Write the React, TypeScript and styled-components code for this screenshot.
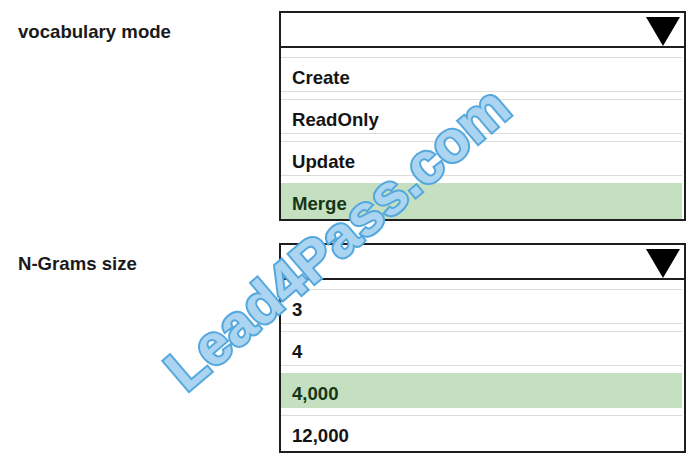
import React from "react";
import styled, { createGlobalStyle } from "styled-components";

interface DropdownField {
  label: string;
  options: string[];
  selected: string;
}

const fields: DropdownField[] = [
  {
    label: "vocabulary mode",
    options: ["Create", "ReadOnly", "Update", "Merge"],
    selected: "Merge",
  },
  {
    label: "N-Grams size",
    options: ["3", "4", "4,000", "12,000"],
    selected: "4,000",
  },
];

const GlobalStyle = createGlobalStyle`
  html, body {
    margin: 0;
    padding: 0;
    background: #ffffff;
  }
  body {
    font-family: "Liberation Sans", Arial, sans-serif;
    color: #161616;
  }
`;

const Page = styled.div`
  position: relative;
  width: 695px;
  height: 467px;
  box-sizing: border-box;
  padding: 11px 9px 0 18px;
  display: grid;
  grid-template-columns: 261px 407px;
  row-gap: 22px;
  align-content: start;
  overflow: hidden;
`;

const FieldLabel = styled.div`
  padding-top: 10px;
  font-size: 18.6px;
  font-weight: 700;
  line-height: 21px;
  color: #1a1a1a;
`;

const Dropdown = styled.div`
  width: 407px;
  height: 210px;
  box-sizing: border-box;
  border: 2px solid #1e1e1e;
  display: flex;
  flex-direction: column;
`;

const Header = styled.div`
  height: 35px;
  box-sizing: border-box;
  border-bottom: 2px solid #1e1e1e;
  display: flex;
  justify-content: flex-end;
  align-items: flex-end;
  padding-right: 4px;
`;

const OptionList = styled.div`
  flex: 1;
  display: flex;
  flex-direction: column;
  gap: 7px;
  padding: 9px 2px 0 0;
`;

const Option = styled.div<{ $selected: boolean }>`
  height: 35px;
  box-sizing: border-box;
  border-top: 1px solid ${(p) => (p.$selected ? "#c4e0c1" : "#dcdcdc")};
  border-bottom: 1px solid ${(p) => (p.$selected ? "#c4e0c1" : "#dcdcdc")};
  background: ${(p) => (p.$selected ? "#c4e0c1" : "#ffffff")};
  color: ${(p) => (p.$selected ? "#143614" : "#141414")};
  display: flex;
  align-items: center;
  padding: 7px 0 0 11px;
  font-size: 18.6px;
  font-weight: 700;

  &:last-child {
    flex: 1;
    height: auto;
    border-bottom: none;
    padding-top: 5px;
  }
`;

const Watermark = styled.span`
  position: absolute;
  left: 337px;
  top: 238px;
  transform: translate(-50%, -50%) rotate(-40.5deg);
  font-family: "Liberation Sans", Arial, sans-serif;
  font-size: 57px;
  font-weight: 700;
  letter-spacing: 0;
  white-space: nowrap;
  color: #aad4ef;
  -webkit-text-stroke: 4px #55a8dd;
  paint-order: stroke fill;
  pointer-events: none;
`;

function Arrow() {
  return (
    <svg width="34" height="29" viewBox="0 0 34 29">
      <polygon points="0,0 34,0 17,29" fill="#000000" />
    </svg>
  );
}

export default function App() {
  return (
    <>
      <GlobalStyle />
      <Page>
        {fields.map((field) => (
          <React.Fragment key={field.label}>
            <FieldLabel>{field.label}</FieldLabel>
            <Dropdown>
              <Header>
                <Arrow />
              </Header>
              <OptionList>
                {field.options.map((option) => (
                  <Option key={option} $selected={option === field.selected}>
                    {option}
                  </Option>
                ))}
              </OptionList>
            </Dropdown>
          </React.Fragment>
        ))}
        <Watermark>Lead4Pass.com</Watermark>
      </Page>
    </>
  );
}
